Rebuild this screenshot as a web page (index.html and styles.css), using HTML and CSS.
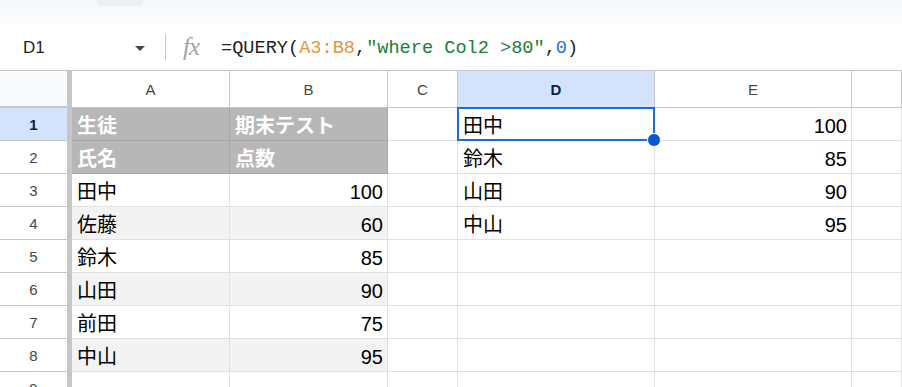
FILE: index.html
```html
<!DOCTYPE html>
<html lang="ja">
<head>
    <meta charset="UTF-8">
    <meta name="viewport" content="width=device-width, initial-scale=1.0">
    <title>QUERY</title>
    <link rel="stylesheet" href="styles.css">
</head>
<body>

    <div class="topstrip"><div class="tab-bump"></div></div>

    <div class="formula-bar">
        <div class="namebox">
            <span>D1</span>
            <span class="arrow"></span>
        </div>
        <div class="sep"></div>
        <div class="fx">fx</div>
        <div class="formula">=QUERY(<span class="ref">A3:B8</span>,<span class="str">"where Col2 &gt;80"</span>,<span class="num">0</span>)</div>
    </div>

    <div class="sheet">
        <div class="corner"></div>
        <div class="colhead">A</div>
        <div class="colhead">B</div>
        <div class="colhead">C</div>
        <div class="colhead active">D</div>
        <div class="colhead">E</div>
        <div class="colhead"></div>

        <div class="rowhead active">1</div>
        <div class="cell head">生徒</div>
        <div class="cell head">期末テスト</div>
        <div class="cell"></div>
        <div class="cell selected">田中<span class="handle"></span></div>
        <div class="cell right">100</div>
        <div class="cell"></div>

        <div class="rowhead">2</div>
        <div class="cell head">氏名</div>
        <div class="cell head">点数</div>
        <div class="cell"></div>
        <div class="cell">鈴木</div>
        <div class="cell right">85</div>
        <div class="cell"></div>

        <div class="rowhead">3</div>
        <div class="cell">田中</div>
        <div class="cell right">100</div>
        <div class="cell"></div>
        <div class="cell">山田</div>
        <div class="cell right">90</div>
        <div class="cell"></div>

        <div class="rowhead">4</div>
        <div class="cell band">佐藤</div>
        <div class="cell band right">60</div>
        <div class="cell"></div>
        <div class="cell">中山</div>
        <div class="cell right">95</div>
        <div class="cell"></div>

        <div class="rowhead">5</div>
        <div class="cell">鈴木</div>
        <div class="cell right">85</div>
        <div class="cell"></div>
        <div class="cell"></div>
        <div class="cell"></div>
        <div class="cell"></div>

        <div class="rowhead">6</div>
        <div class="cell band">山田</div>
        <div class="cell band right">90</div>
        <div class="cell"></div>
        <div class="cell"></div>
        <div class="cell"></div>
        <div class="cell"></div>

        <div class="rowhead">7</div>
        <div class="cell">前田</div>
        <div class="cell right">75</div>
        <div class="cell"></div>
        <div class="cell"></div>
        <div class="cell"></div>
        <div class="cell"></div>

        <div class="rowhead">8</div>
        <div class="cell band">中山</div>
        <div class="cell band right">95</div>
        <div class="cell"></div>
        <div class="cell"></div>
        <div class="cell"></div>
        <div class="cell"></div>

        <div class="rowhead">9</div>
        <div class="cell"></div>
        <div class="cell"></div>
        <div class="cell"></div>
        <div class="cell"></div>
        <div class="cell"></div>
        <div class="cell"></div>
    </div>

</body>
</html>
```

FILE: styles.css
```css
body {
    margin: 0;
    width: 902px;
    height: 387px;
    overflow: hidden;
    background: #ffffff;
    font-family: "Liberation Sans", "Noto Sans CJK JP", sans-serif;
    color: #000000;
}

.topstrip {
    height: 24px;
    background: linear-gradient(#f5f7fa, #fbfcfd);
}

.tab-bump {
    width: 46px;
    height: 6px;
    margin-left: 97px;
    background: #eceff3;
    border-radius: 0 0 8px 8px;
}

.formula-bar {
    height: 46px;
    display: flex;
    align-items: center;
    border-bottom: 1px solid #c4c7c5;
}

.namebox {
    width: 165px;
    box-sizing: border-box;
    padding: 2px 20px 0 23px;
    display: flex;
    justify-content: space-between;
    align-items: center;
    font-size: 17px;
    color: #1f1f1f;
}

.namebox .arrow {
    width: 0;
    height: 0;
    border-left: 5px solid transparent;
    border-right: 5px solid transparent;
    border-top: 5px solid #444746;
}

.sep {
    width: 1px;
    height: 26px;
    background: #c4c7c5;
}

.fx {
    margin-left: 17px;
    font-family: "Liberation Serif", serif;
    font-style: italic;
    font-size: 25px;
    color: #a3a3a3;
    letter-spacing: -1px;
}

.formula {
    margin-left: 22px;
    padding-top: 2px;
    font-family: "Liberation Mono", monospace;
    font-size: 18.6px;
    color: #1f1f1f;
    white-space: pre;
}

.formula .ref { color: #e8943a; }
.formula .str { color: #188038; }
.formula .num { color: #1a73e8; }

.sheet {
    display: grid;
    grid-template-columns: 72px 158px 158px 70px 197px 197px 1fr;
    grid-template-rows: 37px repeat(9, 33px);
}

.corner {
    background: #f8f9fa;
    border-right: 5px solid #c4c7c5;
    border-bottom: 2px solid #c4c7c5;
    box-sizing: border-box;
}

.colhead {
    display: flex;
    align-items: center;
    justify-content: center;
    font-size: 15px;
    color: #444746;
    border-right: 1px solid #c4c7c5;
    border-bottom: 1px solid #c4c7c5;
    box-sizing: border-box;
}

.rowhead {
    display: flex;
    align-items: center;
    justify-content: center;
    font-size: 15px;
    color: #444746;
    border-right: 5px solid #c4c7c5;
    border-bottom: 1px solid #c4c7c5;
    box-sizing: border-box;
}

.colhead.active,
.rowhead.active {
    background: #d3e3fd;
    color: #0b1f4a;
    font-weight: bold;
}

.cell {
    position: relative;
    display: flex;
    align-items: flex-end;
    padding: 0 5px 2px 5px;
    font-size: 20px;
    line-height: 24px;
    border-right: 1px solid #e1e1e1;
    border-bottom: 1px solid #e1e1e1;
    box-sizing: border-box;
    white-space: nowrap;
}

.cell.right {
    justify-content: flex-end;
    padding-right: 4px;
}

.cell.head {
    background: #b7b7b7;
    color: #ffffff;
    font-weight: bold;
    border-color: #a8a8a8;
}

.cell.band {
    background: #f3f3f3;
}

.cell.selected::after {
    content: "";
    position: absolute;
    left: -1px;
    top: -1px;
    right: -1px;
    bottom: -1px;
    border: 2px solid #1a6ddb;
}

.handle {
    position: absolute;
    right: -7px;
    bottom: -7px;
    width: 12px;
    height: 12px;
    border-radius: 50%;
    background: #0b57d0;
    border: 1px solid #ffffff;
    z-index: 2;
}
```
